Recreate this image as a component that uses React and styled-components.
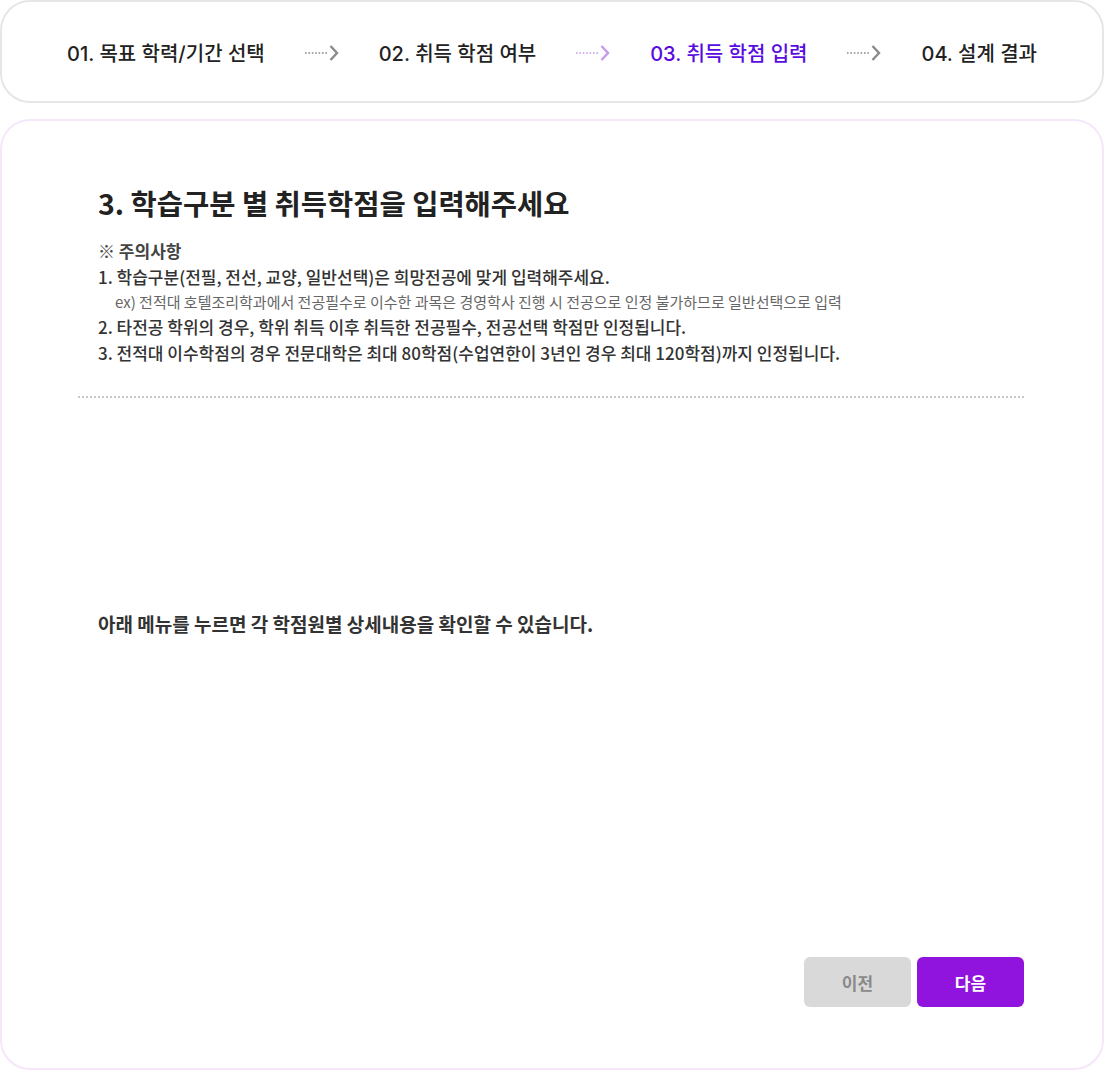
import React from "react";
import styled, { createGlobalStyle } from "styled-components";

const Global = createGlobalStyle`
  html, body { margin: 0; padding: 0; background: #fff; }
  body { font-family: "Noto Sans CJK KR", "Noto Sans", sans-serif; color: #222; }
  * { box-sizing: border-box; }
`;

const Page = styled.div`
  width: 1104px;
  display: flex;
  flex-direction: column;
  gap: 16px;
`;

const StepBar = styled.div`
  height: 103px;
  border: 2px solid #e6e6e6;
  border-radius: 30px;
  display: flex;
  align-items: center;
  justify-content: center;
  gap: 40px;
  padding-top: 2px;
`;

const Step = styled.div`
  font-family: "Inter", "Noto Sans CJK KR", sans-serif;
  font-size: 20px;
  font-weight: 500;
  letter-spacing: 0;
  color: ${(p) => (p.$active ? "#5a0ce0" : "#222")};
`;

const Arrow = ({ color }) => (
  <svg width="34" height="20" viewBox="0 0 34 20">
    <line x1="0" y1="10" x2="23" y2="10" stroke={color} strokeWidth="1.4" strokeDasharray="1.6 1.8" />
    <polyline points="25.5,3 32,10 25.5,17" fill="none" stroke={color} strokeWidth="2.4" />
  </svg>
);

const Card = styled.div`
  height: 951px;
  border: 2px solid #f5e6fc;
  border-radius: 30px;
  padding: 62px 78px 61px 76px;
  display: flex;
  flex-direction: column;
`;

const Intro = styled.div`
  padding: 0 20px;
`;

const Title = styled.h1`
  margin: 0;
  font-size: 28.5px;
  font-weight: 700;
  line-height: 40px;
  color: #222;
`;

const NoticeHead = styled.div`
  margin-top: 15px;
  font-size: 17px;
  font-weight: 700;
  line-height: 26px;
  color: #444;
`;

const Line = styled.div`
  font-size: 17px;
  font-weight: 500;
  line-height: 26px;
  color: #333;
`;

const SubLine = styled.div`
  font-size: 15px;
  font-weight: 400;
  line-height: 24px;
  color: #666;
  padding-left: 17px;
`;

const Divider = styled.hr`
  margin: 30px 0 0;
  border: none;
  border-top: 2px dotted #c8c8c8;
`;

const Guide = styled.p`
  margin: 212px 0 0;
  padding: 0 20px;
  font-size: 19px;
  font-weight: 700;
  color: #333;
  line-height: 28px;
`;

const Buttons = styled.div`
  margin-top: auto;
  display: flex;
  justify-content: flex-end;
  gap: 6px;
`;

const Button = styled.button`
  width: 107px;
  height: 50px;
  border: none;
  border-radius: 6px;
  font-family: "Noto Sans CJK KR", sans-serif;
  font-size: 17px;
  font-weight: 700;
  background: ${(p) => (p.$primary ? "#9014de" : "#d9d9d9")};
  color: ${(p) => (p.$primary ? "#fff" : "#8a8a8a")};
`;

const steps = ["01. 목표 학력/기간 선택", "02. 취득 학점 여부", "03. 취득 학점 입력", "04. 설계 결과"];

export default function App() {
  return (
    <>
      <Global />
      <Page>
        <StepBar>
          {steps.map((s, i) => (
            <React.Fragment key={s}>
              <Step $active={i === 2}>{s}</Step>
              {i < steps.length - 1 && <Arrow color={i === 1 ? "#c79be8" : "#8a8a8a"} />}
            </React.Fragment>
          ))}
        </StepBar>
        <Card>
          <Intro>
            <Title>3. 학습구분 별 취득학점을 입력해주세요</Title>
            <NoticeHead>※ 주의사항</NoticeHead>
            <Line>1. 학습구분(전필, 전선, 교양, 일반선택)은 희망전공에 맞게 입력해주세요.</Line>
            <SubLine>ex) 전적대 호텔조리학과에서 전공필수로 이수한 과목은 경영학사 진행 시 전공으로 인정 불가하므로 일반선택으로 입력</SubLine>
            <Line>2. 타전공 학위의 경우, 학위 취득 이후 취득한 전공필수, 전공선택 학점만 인정됩니다.</Line>
            <Line>3. 전적대 이수학점의 경우 전문대학은 최대 80학점(수업연한이 3년인 경우 최대 120학점)까지 인정됩니다.</Line>
          </Intro>
          <Divider />
          <Guide>아래 메뉴를 누르면 각 학점원별 상세내용을 확인할 수 있습니다.</Guide>
          <Buttons>
            <Button>이전</Button>
            <Button $primary>다음</Button>
          </Buttons>
        </Card>
      </Page>
    </>
  );
}
